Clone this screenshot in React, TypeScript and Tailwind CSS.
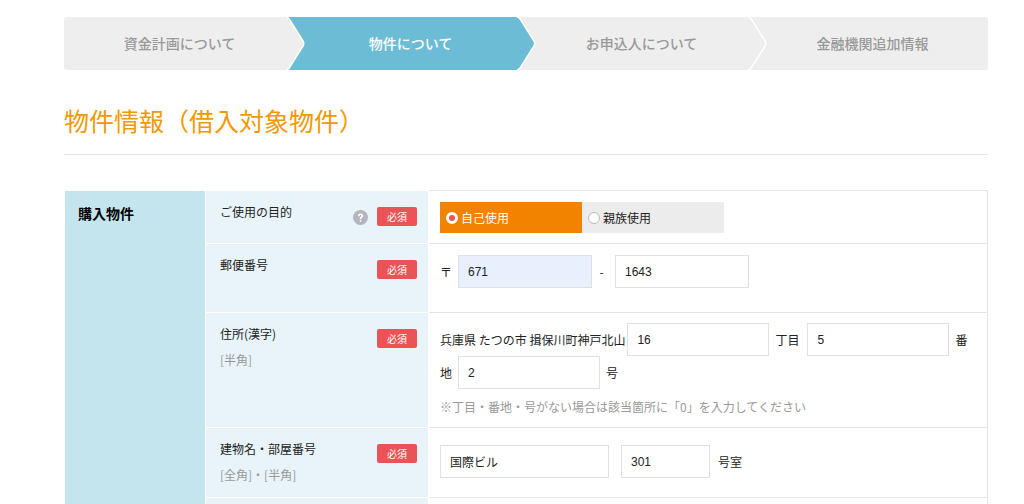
import type { ComponentProps, ReactNode } from "react";
import clsx from "clsx";

const steps = [
  { label: "資金計画について", active: false },
  { label: "物件について", active: true },
  { label: "お申込人について", active: false },
  { label: "金融機関追加情報", active: false },
];

const stepColor = (active: boolean) => (active ? "#6dbcd6" : "#eeeeee");

const StepArrow = ({ from, to }: { from: string; to: string }) => (
  <svg
    className="absolute top-0 -right-2.5 z-10 h-full w-5"
    viewBox="0 0 20 53"
    preserveAspectRatio="none"
    aria-hidden="true"
  >
    <rect width="20" height="53" fill={to} />
    <path d="M0 0 Q3 0 4.500 2.500 L18 24 Q19.500 26.500 18 29 L4.500 50.500 Q3 53 0 53 Z" fill={from} />
    <path
      d="M1 0 Q3 0 4.500 2.500 L18 24 Q19.500 26.500 18 29 L4.500 50.500 Q3 53 1 53"
      fill="none"
      stroke="#fff"
      strokeWidth="1.500"
    />
  </svg>
);

const Steps = () => (
  <ol className="flex h-[53px] overflow-hidden rounded-[3px]">
    {steps.map((step, i) => (
      <li
        key={step.label}
        aria-current={step.active ? "step" : undefined}
        className={clsx(
          "relative flex flex-1 items-center justify-center pb-0.5 text-sm font-medium",
          step.active ? "bg-[#6dbcd6] text-white" : "bg-[#eeeeee] text-[#999999]",
        )}
      >
        {step.label}
        {i < steps.length - 1 && <StepArrow from={stepColor(step.active)} to={stepColor(steps[i + 1].active)} />}
      </li>
    ))}
  </ol>
);

const TextInput = ({ className, ...props }: ComponentProps<"input">) => (
  <input
    type="text"
    className={clsx(
      "h-[33px] border border-[#e0e0e0] px-[9px] font-['Liberation_Sans','Noto_Sans_CJK_JP',sans-serif] text-xs text-[#222222] outline-none",
      className,
    )}
    {...props}
  />
);

const HelpButton = () => (
  <button
    type="button"
    aria-label="ヘルプ"
    className="mt-[3px] mr-[9px] flex size-[15px] items-center justify-center rounded-full bg-[#b5b5bd] text-white"
  >
    <svg width="15" height="15" viewBox="0 0 15 15" fill="none" stroke="currentColor" aria-hidden="true">
      <path d="M5.700 6.200 C5.700 3.600 9.400 3.700 9.300 5.900 C9.200 7.300 7.500 7.200 7.500 8.900" strokeWidth="1.600" />
      <circle cx="7.500" cy="10.900" r="0.600" fill="currentColor" strokeWidth="0.700" />
    </svg>
  </button>
);

type RowHeadProps = {
  label: string;
  sub?: string;
  help?: boolean;
  first?: boolean;
};

const RowHead = ({ label, sub, help, first }: RowHeadProps) => (
  <th
    scope="row"
    className={clsx(
      "border-r border-b border-white bg-[#e8f4f9] bg-clip-padding pr-[11px] pl-3.5 text-left align-top font-normal",
      first && "border-t",
    )}
  >
    <div className="flex items-start">
      <div className="flex-1 pt-3 leading-[18px]">
        <div>{label}</div>
        {sub && <div className="mt-2 text-[#999999]">{sub}</div>}
      </div>
      <div className="flex pt-4">
        {help && <HelpButton />}
        <span className="flex h-[19px] w-10 items-center justify-center rounded-[2px] bg-[#ea5456] text-[10px] text-white">
          必須
        </span>
      </div>
    </div>
  </th>
);

const RowBody = ({ children, className }: { children?: ReactNode; className?: string }) => (
  <td className={clsx("border-r border-b border-[#e5e5e5] pr-2 pl-[11px] align-top", className)}>{children}</td>
);

const purposes = [
  { value: "self", label: "自己使用" },
  { value: "family", label: "親族使用" },
];

const App = () => {
  return (
    <main className="bg-white pt-[17px] pr-9 pl-16 font-['Noto_Sans_CJK_JP',sans-serif] text-xs text-[#222222]">
      <Steps />

      <h1 className="mt-8 border-b border-[#e5e5e5] pb-4 text-[25px] leading-9 font-normal text-[#f39800]">
        物件情報（借入対象物件）
      </h1>

      <form className="mt-[35px]">
        <table className="w-full table-fixed border-separate border-spacing-0">
          <colgroup>
            <col className="w-[142px]" />
            <col className="w-[223px]" />
            <col />
          </colgroup>
          <tbody>
            <tr className="h-[54px]">
              <th
                rowSpan={5}
                scope="rowgroup"
                className="border-x border-t border-white bg-[#c4e5ee] bg-clip-padding pt-3 pl-[13px] text-left align-top text-sm leading-5 font-bold text-black"
              >
                購入物件
              </th>
              <RowHead label="ご使用の目的" help first />
              <RowBody className="border-t pt-[11px]">
                <div className="flex">
                  {purposes.map((p) => (
                    <label
                      key={p.value}
                      className="flex h-[31px] w-[142px] items-center bg-[#ececec] pl-1.5 has-checked:bg-[#f18300] has-checked:text-white"
                    >
                      <input
                        type="radio"
                        name="purpose"
                        value={p.value}
                        defaultChecked={p.value === "self"}
                        className="mr-[3px] size-3 appearance-none rounded-full border border-[#bbbbbb] bg-white checked:border-[3px] checked:border-white checked:bg-[#ea5456]"
                      />
                      {p.label}
                    </label>
                  ))}
                </div>
              </RowBody>
            </tr>

            <tr className="h-[69px]">
              <RowHead label="郵便番号" />
              <RowBody className="pt-[11px]">
                <div className="flex items-center">
                  <span className="mr-1.5">〒</span>
                  <TextInput aria-label="郵便番号 前半" defaultValue="671" className="w-[134px] bg-[#e8f0fe]" />
                  <span className="w-[23px] pr-1 text-center">-</span>
                  <TextInput aria-label="郵便番号 後半" defaultValue="1643" className="w-[134px]" />
                </div>
              </RowBody>
            </tr>

            <tr className="h-[115px]">
              <RowHead label="住所(漢字)" sub="[半角]" />
              <RowBody className="pt-2.5">
                <div className="flex flex-wrap items-center gap-x-1.5">
                  <div className="flex items-center gap-0.5">
                    <span>兵庫県 たつの市 揖保川町神戸北山</span>
                    <TextInput aria-label="丁目" defaultValue="16" className="w-[142px]" />
                  </div>
                  <span className="mr-0.5">丁目</span>
                  <TextInput aria-label="番地" defaultValue="5" className="w-[142px]" />
                  <span>番</span>
                  <span>地</span>
                  <TextInput aria-label="号" defaultValue="2" className="w-[142px]" />
                  <span>号</span>
                </div>
                <p className="mt-[9px] leading-[18px] text-[#999999]">
                  ※丁目・番地・号がない場合は該当箇所に「0」を入力してください
                </p>
              </RowBody>
            </tr>

            <tr className="h-[70px]">
              <RowHead label="建物名・部屋番号" sub="[全角]・[半角]" />
              <RowBody className="pt-[17px]">
                <div className="flex items-center">
                  <TextInput aria-label="建物名" defaultValue="国際ビル" className="mr-3 w-[169px]" />
                  <TextInput aria-label="部屋番号" defaultValue="301" className="mr-2 w-[89px]" />
                  <span>号室</span>
                </div>
              </RowBody>
            </tr>

            <tr className="h-1.5">
              <td className="border-r border-white bg-[#e8f4f9] bg-clip-padding" />
              <td className="border-r border-[#e5e5e5]" />
            </tr>
          </tbody>
        </table>
      </form>
    </main>
  );
};

export default App;
